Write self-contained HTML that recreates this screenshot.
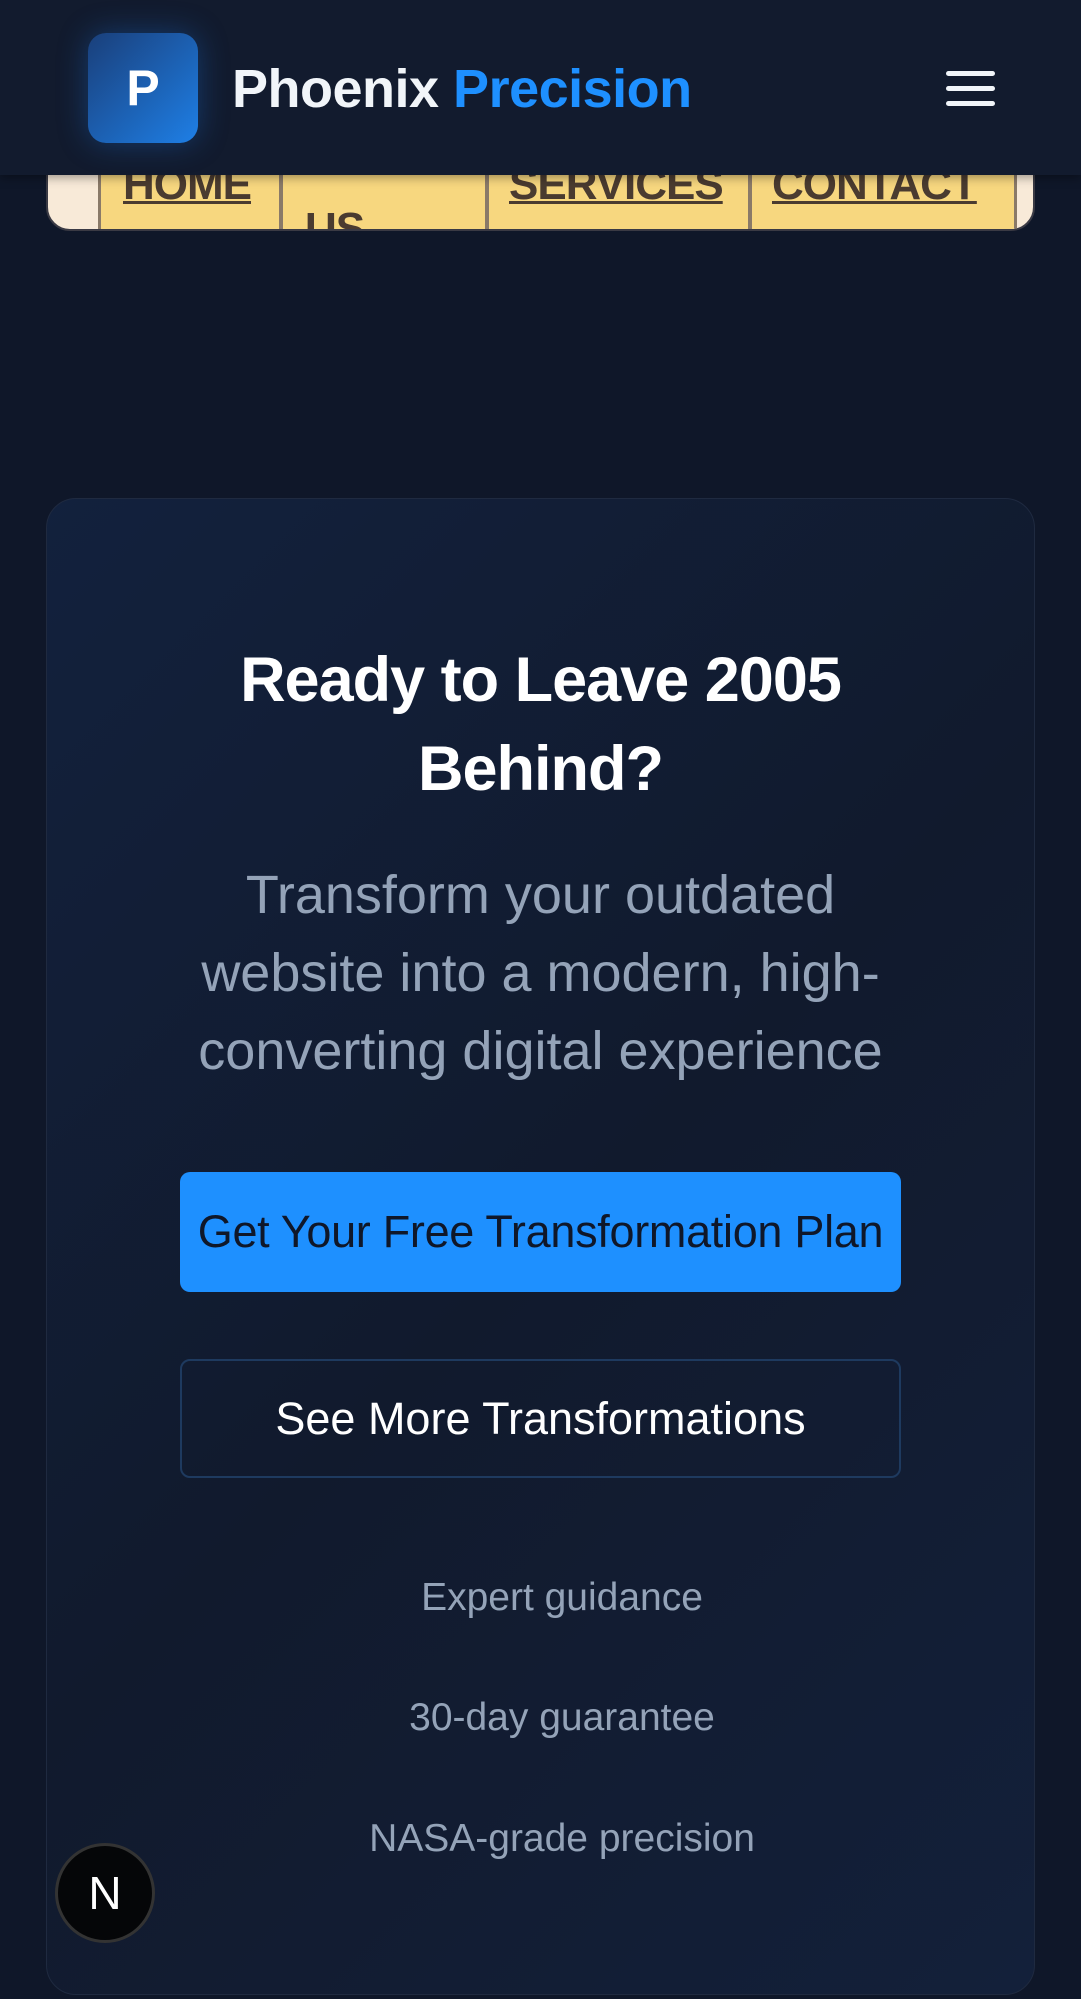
<!DOCTYPE html>
<html><head><meta charset="utf-8"><style>
*{margin:0;padding:0;box-sizing:border-box}
body{width:1081px;height:1999px;overflow:hidden;background:#0f1729;font-family:"Liberation Sans",sans-serif;position:relative}
.hdr{position:absolute;left:0;top:0;width:1081px;height:175px;background:#121b2e;z-index:5;box-shadow:0 2px 10px rgba(0,0,0,.4)}
.logo{position:absolute;left:88px;top:33px;width:110px;height:110px;border-radius:18px;background:linear-gradient(135deg,#1a3f7a,#1e7fe6);box-shadow:0 0 30px rgba(30,120,230,.35);color:#fff;font-weight:bold;font-size:50px;text-align:center;line-height:110px}
.brand{position:absolute;left:232px;top:58px;font-size:54px;font-weight:bold;color:#f1f5f9;letter-spacing:-0.5px}
.brand span{color:#1e90ff}
.hb{position:absolute;left:946px;width:49px;height:5px;border-radius:3px;background:#f1f5f9}
.nav{position:absolute;left:46px;top:120px;width:989px;height:111px;border-radius:0 0 24px 24px;background:#f8ead8;overflow:hidden;border:2px solid #3a3a44}
.cell{position:absolute;top:0;height:111px;background:#f7d77f;border-left:3px solid #8a7a68;border-right:3px solid #8a7a68}
.cell a{position:absolute;font-size:44px;font-weight:bold;color:#4a3b30;text-decoration:underline;text-decoration-thickness:3px;letter-spacing:-1px}
.card{position:absolute;left:46px;top:498px;width:989px;height:1497px;border-radius:30px;background:linear-gradient(135deg,#12213d,#111a2d 50%,#13203a);border:1px solid #1f2a40}
h1{position:absolute;left:0;width:100%;top:636px;text-align:center;color:#fff;font-size:63px;line-height:89px;font-weight:bold;letter-spacing:-1px}
p.sub{position:absolute;left:170px;width:741px;top:856px;text-align:center;color:#94a3b8;font-size:54px;line-height:78px}
.b1{position:absolute;left:180px;top:1172px;width:721px;height:120px;border-radius:10px;background:#1e90ff;color:#0f1729;font-size:45px;text-align:center;line-height:120px;letter-spacing:-0.3px}
.b2{position:absolute;left:180px;top:1359px;width:721px;height:119px;border-radius:10px;border:2px solid #1e3a5f;color:#fff;font-size:45px;text-align:center;line-height:115px}
.f{position:absolute;left:0;width:1124px;text-align:center;color:#94a3b8;font-size:39px}
.nb{position:absolute;left:55px;top:1843px;width:100px;height:100px;border-radius:50%;background:#050608;border:3px solid #333;color:#fff;font-size:46px;text-align:center;line-height:94px}
</style></head><body>
<div class="nav">
<div class="cell" style="left:50px;width:184px"><a style="left:22px;top:38px">HOME</a></div>
<div class="cell" style="left:232px;width:208px"><a style="left:22px;top:82px;text-decoration:none">US</a></div>
<div class="cell" style="left:438px;width:265px"><a style="left:20px;top:38px">SERVICES</a></div>
<div class="cell" style="left:701px;width:268px"><a style="left:20px;top:38px">CONTACT</a></div>
</div>
<div class="hdr">
<div class="logo">P</div>
<div class="brand">Phoenix <span>Precision</span></div>
<div class="hb" style="top:71px"></div><div class="hb" style="top:86px"></div><div class="hb" style="top:101px"></div>
</div>
<div class="card"></div>
<h1>Ready to Leave 2005<br>Behind?</h1>
<p class="sub">Transform your outdated website into a modern, high-converting digital experience</p>
<div class="b1">Get Your Free Transformation Plan</div>
<div class="b2">See More Transformations</div>
<div class="f" style="top:1576px">Expert guidance</div>
<div class="f" style="top:1696px">30-day guarantee</div>
<div class="f" style="top:1817px">NASA-grade precision</div>
<div class="nb">N</div>
</body></html>
